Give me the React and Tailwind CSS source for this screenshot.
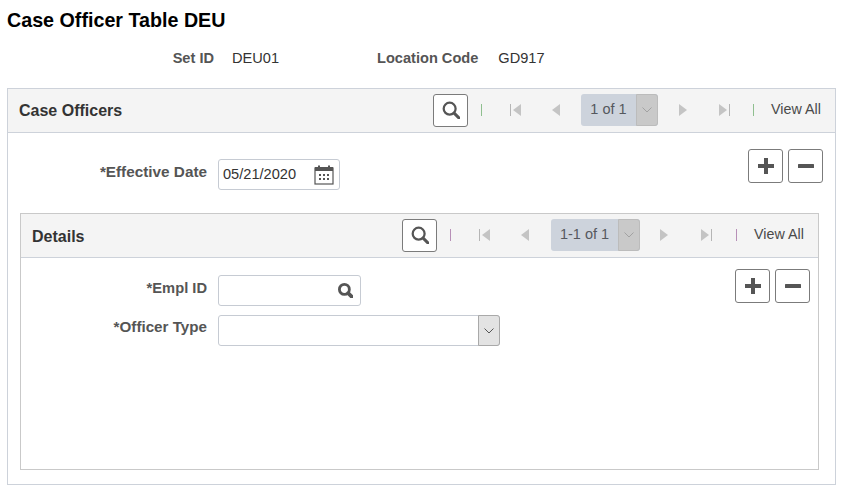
function SearchIcon({ size, ring = 2, handle = 2.6 }) {
  return (
    <svg width={size} height={size} viewBox="0 0 16 16" fill="none" stroke="#555">
      <circle cx="6.8" cy="6.8" r="5.3" strokeWidth={ring} />
      <path d="M10.8 10.8L15 15" strokeWidth={handle} strokeLinecap="round" />
    </svg>
  );
}

function Chevron({ className }) {
  return (
    <svg className={className} width="12" height="8" viewBox="0 0 12 8" fill="none" stroke="currentColor" strokeWidth="1">
      <path d="M1.5 1.5L6 6l4.5-4.5" />
    </svg>
  );
}

function NavIcon({ dir, bar }) {
  const flip = dir === "right" ? "scale-x-[-1]" : "";
  return (
    <svg className={flip} width="11" height="14" viewBox="0 0 11 14" fill="#c4c4c4">
      {bar && <rect x="0" y="1" width="1" height="12" fill="#b5b5b5" />}
      <path d="M11 1v12L3 7z" />
    </svg>
  );
}

function IconButton({ children, className = "" }) {
  return (
    <button className={`flex items-center justify-center w-[35px] bg-white border border-[#7b7b7b] rounded-[3px] ${className}`}>
      {children}
    </button>
  );
}

function PlusMinus() {
  return (
    <div className="flex gap-[5px]">
      <IconButton className="h-[34px]">
        <svg width="18" height="18" viewBox="0 0 18 18" fill="#555">
          <path d="M7 1h4v6h6v4h-6v6H7v-6H1V7h6z" />
        </svg>
      </IconButton>
      <IconButton className="h-[34px]">
        <svg width="18" height="18" viewBox="0 0 18 18" fill="#555">
          <rect x="1" y="7" width="16" height="4" rx="0.5" />
        </svg>
      </IconButton>
    </div>
  );
}

function GridHeader({ title, range, sep, pagerW, titleW, pagerGap, nextGap, lastGap, sepGap }) {
  return (
    <div className="flex items-center h-[44px] pb-[1px] bg-[#f4f4f4] border-b border-[#cdd2da]">
      <div className={`font-bold text-[16px] text-[#333] pl-[11px] ${titleW}`}>{title}</div>
      <IconButton className="h-[33px]">
        <SearchIcon size={18} />
      </IconButton>
      <div className={`w-px h-[12px] ml-[13px] ${sep}`} />
      <div className="ml-[28px] flex items-center gap-[28px]">
        <NavIcon dir="left" bar />
        <NavIcon dir="left" />
      </div>
      <div className={`flex h-[32px] rounded-[3px] bg-[#cdd3dc] text-[14.5px] text-[#55585e] ${pagerGap} ${pagerW}`}>
        <div className="flex-1 flex items-center justify-center">{range}</div>
        <div className="w-[22px] flex items-center justify-center bg-[#c9c9c9] border border-[#bcbcbc] rounded-r-[3px] text-[#a2a2a2]">
          <Chevron />
        </div>
      </div>
      <div className={`flex items-center ${nextGap} ${lastGap}`}>
        <NavIcon dir="right" />
        <NavIcon dir="right" bar />
      </div>
      <div className={`w-px h-[12px] ${sepGap} ${sep}`} />
      <div className="ml-[17px] text-[14.3px] text-[#4a4a4a]">View All</div>
    </div>
  );
}

export default function App() {
  return (
    <div className="w-[842px] h-[491px] bg-white overflow-hidden font-['Liberation_Sans',Arial,sans-serif]">
      <h1 className="pl-[7px] pt-[9px] text-[19.7px] leading-[22px] font-bold text-black">Case Officer Table DEU</h1>
      <div className="flex items-center h-[20px] mt-[18px] text-[14.6px]">
        <div className="w-[214px] text-right font-bold text-[#555]">Set ID</div>
        <div className="ml-[18px] w-[99px] text-[#333]">DEU01</div>
        <div className="ml-[46px] font-bold text-[#555]">Location Code</div>
        <div className="ml-[20px] text-[#333]">GD917</div>
      </div>
      <div className="mt-[19px] ml-[7px] w-[829px] h-[397px] border border-[#cdd2da]">
        <GridHeader
          title="Case Officers"
          range="1 of 1"
          sep="bg-[#8fbf8f]"
          titleW="w-[425px] pt-[1px]"
          pagerW="w-[77px]"
          pagerGap="ml-[21px]"
          nextGap="ml-[21px]"
          lastGap="gap-[29px]"
          sepGap="ml-[23px]"
        />
        <div className="flex items-start pt-[16px] pr-[12px]">
          <div className="flex items-center mt-[10px] h-[31px]">
            <div className="w-[199px] mb-[4px] text-right font-bold text-[15.3px] text-[#555]">*Effective Date</div>
            <div className="ml-[11px] w-[122px] h-[31px] flex items-center justify-between pl-[4px] pr-[5px] border border-[#c6cbd3] rounded-[3px] text-[14.6px] text-[#333]">
              <span>05/21/2020</span>
              <svg width="20" height="20" viewBox="0 0 20 20" fill="none">
                <rect x="1" y="3" width="18" height="16" fill="none" stroke="#555" strokeWidth="1.2" />
                <rect x="1" y="2" width="18" height="4" fill="#555" />
                <rect x="4" y="0.5" width="2" height="3" fill="#555" />
                <rect x="14" y="0.5" width="2" height="3" fill="#555" />
                <path d="M5 9h2v2H5zM9 9h2v2H9zM13 9h2v2h-2zM5 13h2v2H5zM9 13h2v2H9zM13 13h2v2h-2z" fill="#555" />
              </svg>
            </div>
          </div>
          <div className="ml-auto">
            <PlusMinus />
          </div>
        </div>
        <div className="mt-[23px] ml-[12px] w-[799px] h-[257px] border border-[#c9c9c9]">
          <GridHeader
            title="Details"
            range="1-1 of 1"
            sep="bg-[#b78fb7]"
            titleW="w-[381px] pt-[3px]"
            pagerW="w-[89px]"
            pagerGap="ml-[22px]"
            nextGap="ml-[20px]"
            lastGap="gap-[30px]"
            sepGap="ml-[24px]"
          />
          <div className="flex items-start pt-[11px] pr-[8px]">
            <div className="flex flex-col gap-[9px] mt-[6px]">
              <div className="flex items-center h-[31px]">
                <div className="w-[186px] mb-[4px] text-right font-bold text-[14.7px] text-[#555]">*Empl ID</div>
                <div className="ml-[11px] w-[143px] h-[31px] flex items-center justify-end pr-[7px] border border-[#c6cbd3] rounded-[3px]">
                  <SearchIcon size={15} ring={3} handle={4} />
                </div>
              </div>
              <div className="flex items-center h-[31px]">
                <div className="w-[186px] mb-[6px] text-right font-bold text-[15.2px] text-[#555]">*Officer Type</div>
                <div className="ml-[11px] w-[282px] h-[31px] flex justify-end border border-[#c6cbd3] rounded-[3px]">
                  <div className="w-[22px] -my-px -mr-px flex items-center justify-center bg-[#e3e3e3] border border-[#a9a9a9] rounded-r-[3px] text-[#555]">
                    <Chevron />
                  </div>
                </div>
              </div>
            </div>
            <div className="ml-auto">
              <PlusMinus />
            </div>
          </div>
        </div>
      </div>
    </div>
  );
}
